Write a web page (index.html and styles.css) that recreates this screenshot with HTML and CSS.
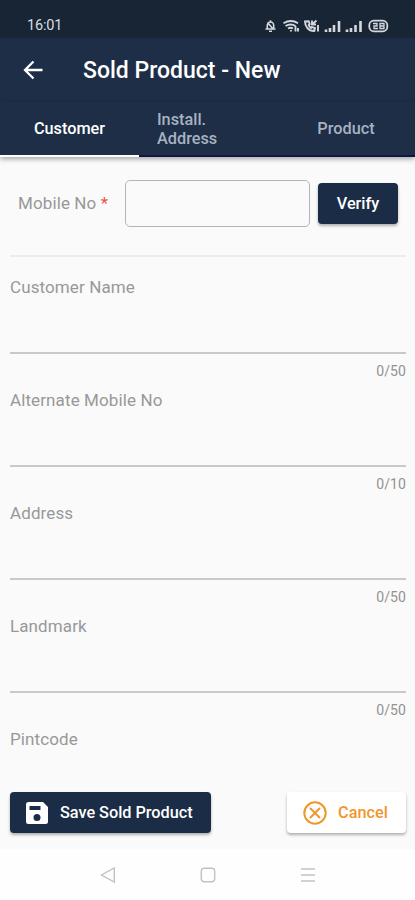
FILE: index.html
```html
<!DOCTYPE html>
<html lang="en">
<head>
<meta charset="utf-8">
<meta name="viewport" content="width=device-width, initial-scale=1">
<title>Sold Product - New</title>
<link rel="stylesheet" href="styles.css">
</head>
<body>
<div class="screen">
  <div class="status">
    <span class="clock">16:01</span>
    <svg class="status-icons" width="126" height="16" viewBox="0 0 126 16" fill="none" stroke="#d3d8de" stroke-width="1.6">
      <path d="M1.500 11h10M3.300 11V7.500a3.200 3.500 0 0 1 6.400 0V11M6.500 4V2.200M5 13.200h3M3.500 4.500l6 7"/>
      <path d="M19.500 5.300q7.500-4.500 14.500 0M21.500 8q5.200-3 10 0M24 10.500q2.500-1.500 5 0M27 12v1.500M31.500 8v5.500M34 10v3.500" stroke-width="1.900"/>
      <path d="M41 3.500c0 5 3.500 9.500 9 9.500l1-3-3-1-1 1c-1-.7-2-2-2.300-3l1-1-1-2.700zM48 2.500v4h4M48.500 6l4-3.500M50.500 13.500V11M54 13.500V7" stroke-width="1.900"/>
      <path d="M62 14v-2.500M66 14v-4M70 14V7M75 14V3M83 14v-2.500M87 14v-4M91.500 14V7M96.500 14V3" stroke-width="2.600"/>
      <rect x="105.300" y="2.700" width="18" height="10.600" rx="4.500" stroke-width="1.800"/>
      <path d="M109 5.500h4v2.500h-3v2.500h4M116 5.500h4v5h-4zM116 8h4" stroke-width="1.300"/>
    </svg>
  </div>
  <header class="appbar">
    <svg class="back" width="24" height="24" viewBox="0 0 24 24" fill="none" stroke="#fff" stroke-width="2.300"><path d="M22.500 12H5M13.500 3.500 5 12l8.500 8.500"/></svg>
    <h1>Sold Product - New</h1>
  </header>
  <nav class="tabs">
    <a class="tab active">Customer</a>
    <a class="tab install"><span>Install.<br>Address</span></a>
    <a class="tab">Product</a>
  </nav>
  <main class="form">
    <div class="mobile">
      <label>Mobile No <span class="required">*</span></label>
      <div class="box"></div>
      <button class="btn verify">Verify</button>
    </div>
    <div class="field"><label>Customer Name</label><span class="count">0/50</span></div>
    <div class="field"><label>Alternate Mobile No</label><span class="count">0/10</span></div>
    <div class="field"><label>Address</label><span class="count">0/50</span></div>
    <div class="field"><label>Landmark</label><span class="count">0/50</span></div>
    <div class="field last"><label>Pintcode</label></div>
  </main>
  <footer class="actions">
    <button class="btn save">
      <svg width="22" height="22" viewBox="0 0 22 22"><path fill="#fff" fill-rule="evenodd" d="M2.500 0H17l5 5v14.500a2.500 2.500 0 0 1-2.500 2.500h-17A2.500 2.500 0 0 1 0 19.500v-17A2.500 2.500 0 0 1 2.500 0zM3.500 4v4h11V4zM11 12a3.500 3.500 0 1 0 0 7 3.500 3.500 0 0 0 0-7z"/></svg>
      <span>Save Sold Product</span>
    </button>
    <button class="btn cancel">
      <svg width="24" height="24" viewBox="0 0 24 24" fill="none" stroke="#f0962d" stroke-width="2"><circle cx="12" cy="12" r="10.700"/><path d="m7 7 10 10m0-10L7 17"/></svg>
      <span>Cancel</span>
    </button>
  </footer>
  <div class="sysnav">
    <svg width="16" height="16" viewBox="0 0 16 16"><path d="M14.300 1v14L1.500 8z"/></svg>
    <svg width="16" height="16" viewBox="0 0 16 16"><rect x="1.300" y="1.300" width="13.400" height="13.400" rx="3"/></svg>
    <svg width="16" height="16" viewBox="0 0 16 16"><path d="M1 2h14M1 8h14M1 14h14"/></svg>
  </div>
</div>
</body>
</html>
```
FILE: styles.css
```css
* { box-sizing: border-box; }
body { margin: 0; background: #fafafa; font-family: Roboto, "Liberation Sans", sans-serif; }
.screen { width: 415px; height: 900px; display: flex; flex-direction: column; overflow: hidden; }
.status { height: 38px; flex: none; background: #182534; display: flex; justify-content: space-between; padding: 15px 25px 0 27px; color: #d8dde2; }
.clock { font-size: 14.5px; line-height: 22px; letter-spacing: -.2px; }
.status-icons { margin-top: 3px; }
.appbar { height: 64px; flex: none; background: #1d2e46; display: flex; align-items: center; padding-left: 20px; color: #fff; }
.appbar h1 { margin: 2px 0 0 39px; font-size: 23px; font-weight: 500; line-height: 28px; }
.tabs { height: 55px; flex: none; background: #1d2e46; display: grid; grid-template-columns: 139px 138px 138px; box-shadow: 0 2px 5px rgba(0,0,0,.35); position: relative; }
.tab { display: flex; align-items: center; justify-content: center; border-bottom: 2px solid #101548; color: #a7b2c2; font-size: 16.3px; line-height: 19px; font-weight: 500; }
.tab.active { color: #fff; border-color: #fff; }
.tab.install { justify-content: flex-start; padding-left: 18px; }
.form { flex: 1; padding: 0 9px 0 10px; min-height: 0; }
.mobile { height: 100px; display: flex; align-items: flex-start; padding: 23px 0 0 8px; border-bottom: 2px solid #ececec; }
label { color: #989898; font-size: 17px; line-height: 22px; letter-spacing: .11px; }
.mobile label { width: 107px; margin-top: 12px; }
.required { color: #ee5548; }
.box { width: 185px; height: 47px; border: 1.500px solid #b5b5b5; border-radius: 5px; }
.btn { display: flex; align-items: center; border: 0; border-radius: 4px; font: 500 16.3px/22px Roboto, "Liberation Sans", sans-serif; background: #1b2c46; color: #fff; box-shadow: 0 2px 3px rgba(0,0,0,.3); padding: 0; }
.verify { width: 80px; height: 41px; margin: 3px 0 0 8px; justify-content: center; }
.field { height: 113px; padding-top: 19px; }
.field label { display: block; height: 78px; border-bottom: 2px solid #c9c9c9; }
.field.last label { border: 0; }
.count { display: block; text-align: right; color: #929292; font-size: 14px; line-height: 18px; margin-top: 8px; letter-spacing: .1px; }
.actions { height: 57px; flex: none; display: flex; justify-content: space-between; align-items: flex-start; padding: 0 9px 0 10px; }
.save { width: 201px; height: 41px; padding-left: 16px; gap: 12px; letter-spacing: -.03px; }
.cancel { width: 119px; height: 41px; background: #fff; color: #f0962d; padding-left: 16px; gap: 11px; }
.sysnav { height: 51px; flex: none; background: #fefefe; display: flex; gap: 84px; padding: 18px 0 0 100px; }
.sysnav svg { fill: none; stroke: #c2c2c2; stroke-width: 1.400; }
```
